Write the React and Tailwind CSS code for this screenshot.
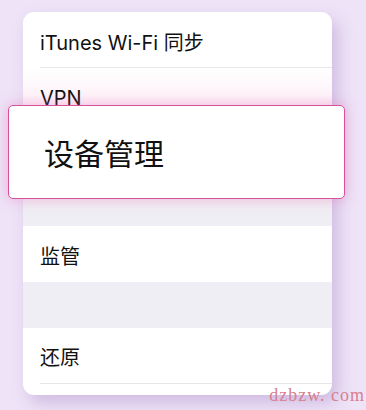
export default function App() {
  const font = { fontFamily: '"Inter", "Noto Sans CJK SC", sans-serif' };

  return (
    <div
      className="relative h-[410px] w-[366px] overflow-hidden bg-[#eee3f7] pl-[23px] pt-[12px] text-[#111111]"
      style={font}
    >
      <div className="flex h-[383px] w-[309px] flex-col overflow-hidden rounded-[11px] bg-white shadow-[6px_8px_16px_rgba(170,140,200,0.45)]">
        <div className="flex h-[55px] items-center pl-[17px] pt-[6px] text-[20px]">iTunes Wi-Fi 同步</div>
        <div className="ml-[17px] h-px bg-[#e6e6ea]" />
        <div className="flex h-[56px] items-center bg-gradient-to-b from-white to-[#fbe6f3] pl-[17px] pt-[4px] text-[20px]">
          VPN
        </div>
        <div className="h-[102px] bg-[#efeef4]" />
        <div className="flex h-[56px] items-center pl-[17px] pt-[6px] text-[20px]">监管</div>
        <div className="h-[46px] bg-[#efeef4]" />
        <div className="flex h-[55px] items-center pl-[17px] pt-[4px] text-[20px]">还原</div>
        <div className="ml-[17px] h-px bg-[#e6e6ea]" />
        <div className="flex-1" />
      </div>

      <div className="absolute left-[8px] top-[105px] flex h-[94px] w-[337px] items-center rounded-[5px] border border-[#d6519c] bg-white pl-[35px] pt-[4px] text-[30px] shadow-[0_0_14px_rgba(236,90,170,0.4)]">
        设备管理
      </div>

      <div
        className="absolute bottom-[1px] right-[1px] text-[18px] tracking-[1px] text-[#d9808f]"
        style={{ fontFamily: '"Liberation Serif", serif' }}
      >
        dzbzw. com
      </div>
    </div>
  );
}
